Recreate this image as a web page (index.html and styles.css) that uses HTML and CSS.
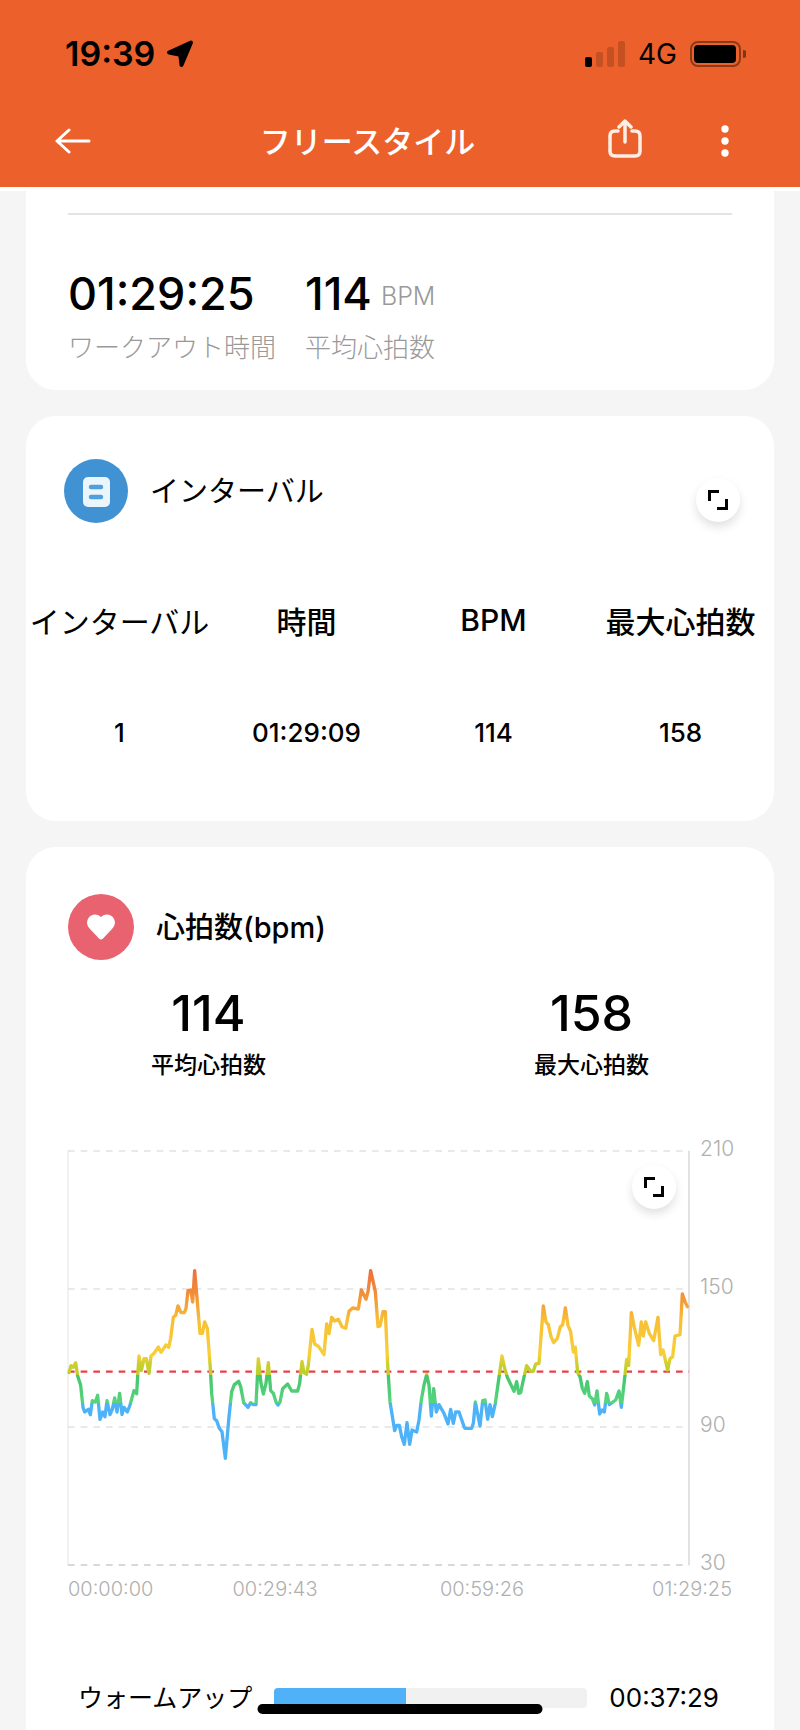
FILE: index.html
```
<!DOCTYPE html>
<html lang="ja">
<head>
    <meta charset="UTF-8">
    <meta name="viewport" content="width=device-width, initial-scale=1.0">
    <title>フリースタイル</title>
    <link rel="stylesheet" href="styles.css">
</head>
<body>
    <div id="wrap">
        <header id="header">
            <div class="status">
                <span class="status__time">19:39</span>
                <svg class="status__location" width="28" height="28" viewBox="0 0 28 28" aria-hidden="true">
                    <path d="M25 2.500 L3 12.500 L13 14.500 Q14.500 15 14.500 16.500 L15.500 25 Z" fill="#000" stroke="#000" stroke-width="4" stroke-linejoin="round"/>
                </svg>
                <svg class="status__signal" width="41" height="26" viewBox="0 0 41 26" aria-hidden="true">
                    <rect x="0" y="16" width="7" height="10" rx="2"/>
                    <g opacity="0.16">
                        <rect x="11" y="11" width="7" height="15" rx="2"/>
                        <rect x="22" y="6" width="7" height="20" rx="2"/>
                        <rect x="33" y="0" width="7" height="26" rx="2"/>
                    </g>
                </svg>
                <span class="status__network">4G</span>
                <svg class="status__battery" width="56" height="26" viewBox="0 0 56 26" aria-hidden="true">
                    <rect x="1" y="1" width="49" height="24" rx="7" fill="none" stroke="#000" stroke-opacity="0.4" stroke-width="2"/>
                    <rect x="4" y="4" width="42" height="18" rx="4"/>
                    <path d="M53 9 a4 4 0 0 1 0 8 Z" fill-opacity="0.45"/>
                </svg>
            </div>
            <nav class="nav">
                <button class="nav__btn" type="button" aria-label="戻る">
                    <svg width="36" height="26" viewBox="0 0 36 26">
                        <path d="M14 2 L2 13 L14 24 M2 13 H34" fill="none" stroke="#fff" stroke-width="3" stroke-linecap="round" stroke-linejoin="round"/>
                    </svg>
                </button>
                <h1 class="nav__title">フリースタイル</h1>
                <button class="nav__btn share" type="button" aria-label="共有">
                    <svg width="34" height="40" viewBox="0 0 34 40">
                        <path d="M10 12 H7 Q2 12 2 17 V32 Q2 37 7 37 H27 Q32 37 32 32 V17 Q32 12 27 12 H24" fill="none" stroke="#fdeee6" stroke-width="3.500" stroke-linecap="round"/>
                        <path d="M17 23 V3 M11 8 L17 2 L23 8" fill="none" stroke="#fdeee6" stroke-width="3.500" stroke-linecap="round" stroke-linejoin="round"/>
                    </svg>
                </button>
                <button class="nav__btn" type="button" aria-label="メニュー">
                    <svg width="10" height="34" viewBox="0 0 10 34">
                        <g fill="#fff">
                            <circle cx="5" cy="5" r="3.700"/>
                            <circle cx="5" cy="17" r="3.700"/>
                            <circle cx="5" cy="29" r="3.700"/>
                        </g>
                    </svg>
                </button>
            </nav>
        </header>

        <main id="main">
            <!-- サマリー -->
            <section class="card summary">
                <div class="summary__item">
                    <p class="summary__num">01:29:25</p>
                    <p class="summary__label">ワークアウト時間</p>
                </div>
                <div class="summary__item">
                    <p class="summary__num">114<span class="unit">BPM</span></p>
                    <p class="summary__label">平均心拍数</p>
                </div>
            </section>

            <!-- インターバル -->
            <section class="card interval">
                <div class="card__head">
                    <svg width="64" height="64" viewBox="0 0 64 64" aria-hidden="true">
                        <circle cx="32" cy="32" r="32" fill="#4192d2"/>
                        <rect x="19" y="18" width="27" height="30" rx="5" fill="#ebf5fc"/>
                        <path d="M27 28 H37 M27 38 H37" stroke="#4f9fdc" stroke-width="4.500" stroke-linecap="round"/>
                    </svg>
                    <h2 class="card__title kana">インターバル</h2>
                    <button class="expand" type="button" aria-label="拡大">
                        <svg width="20" height="20" viewBox="0 0 20 20">
                            <path d="M1.500 11 V1.500 H11 M9 18.500 H18.500 V9" fill="none" stroke="#000" stroke-width="3"/>
                        </svg>
                    </button>
                </div>
                <table class="interval__table">
                    <thead>
                        <tr>
                            <th class="kana" scope="col">インターバル</th>
                            <th scope="col">時間</th>
                            <th scope="col">BPM</th>
                            <th scope="col">最大心拍数</th>
                        </tr>
                    </thead>
                    <tbody>
                        <tr>
                            <td>1</td>
                            <td>01:29:09</td>
                            <td>114</td>
                            <td>158</td>
                        </tr>
                    </tbody>
                </table>
            </section>

            <!-- 心拍数 -->
            <section class="card heart">
                <div class="card__head">
                    <svg width="66" height="66" viewBox="0 0 66 66" aria-hidden="true">
                        <circle cx="33" cy="33" r="33" fill="#e96270"/>
                        <path d="M33 23 C29 19 23 20 20.500 24 C18 28 19 32 22 35 L31 44.500 Q33 46.500 35 44.500 L44 35 C47 32 48 28 45.500 24 C43 20 37 19 33 23 Z" fill="#fff"/>
                    </svg>
                    <h2 class="card__title">心拍数(bpm)</h2>
                </div>
                <div class="heart__stats">
                    <div class="stat">
                        <p class="stat__num">114</p>
                        <p class="stat__label">平均心拍数</p>
                    </div>
                    <div class="stat">
                        <p class="stat__num">158</p>
                        <p class="stat__label">最大心拍数</p>
                    </div>
                </div>
                <div class="chart">
                    <div class="chart__plot">
                        <svg class="chart__svg" viewBox="0 0 1863 1242" role="img" aria-label="心拍数グラフ">
                            <defs>
                                <linearGradient id="zone" gradientUnits="userSpaceOnUse" x1="0" y1="342" x2="0" y2="942">
                                    <stop offset="0" stop-color="#ef6840"/>
                                    <stop offset="0.130" stop-color="#f18a38"/>
                                    <stop offset="0.280" stop-color="#f7c036"/>
                                    <stop offset="0.450" stop-color="#f8cf38"/>
                                    <stop offset="0.500" stop-color="#c8cf2e"/>
                                    <stop offset="0.550" stop-color="#bccf30"/>
                                    <stop offset="0.550" stop-color="#44c66e"/>
                                    <stop offset="0.690" stop-color="#58d47e"/>
                                    <stop offset="0.690" stop-color="#4db2f8"/>
                                    <stop offset="1" stop-color="#4db2f8"/>
                                </linearGradient>
                            </defs>
                            <g fill="none">
                                <path d="M0 0 V1242" stroke="#ececec" stroke-width="4"/>
                                <path d="M1863 0 V1242" stroke="#dcdcdc" stroke-width="5"/>
                                <path d="M0 0 H1863 M0 414 H1863 M0 828 H1863" stroke="#e2e2e2" stroke-width="4" stroke-dasharray="20 18"/>
                                <path d="M0 1242 H1863" stroke="#cccccc" stroke-width="5" stroke-dasharray="20 18"/>
                                <path d="M0 662 H1863" stroke="#ec4048" stroke-width="7" stroke-dasharray="20 18"/>
                                <polyline stroke="url(#zone)" stroke-width="10" stroke-linejoin="round" stroke-linecap="round" points="
                                    3,665 9,644 16,649 23,635 29,675 38,703 45,769 50,783 61,775 67,791 73,749 82,753 89,733 96,805
                                    104,783 111,797 117,749 126,791 133,775 140,741 147,783 155,727 162,791 168,769 178,783 186,762
                                    198,719 206,728 209,675 213,615 220,659 228,623 235,623 243,667 249,615 258,607 271,588 279,604
                                    294,582 302,589 308,562 316,499 323,493 330,465 339,485 349,485 354,472 360,419 368,417 374,453
                                    380,359 396,547 403,547 410,513 418,532 427,652 431,727 439,803 446,809 454,832 462,842 472,922
                                    483,797 491,722 499,701 512,691 518,707 527,755 540,769 548,755 556,761 564,761 571,623 579,697
                                    586,729 594,697 601,635 608,719 616,727 624,753 630,762 636,753 644,713 659,699 671,720 689,720
                                    695,697 702,631 708,665 716,669 721,642 732,535 740,579 752,587 768,611 776,519 783,548 791,499
                                    800,510 811,505 822,527 833,532 843,481 854,471 871,474 880,417 894,445 900,422 908,359 922,422
                                    930,527 936,525 945,482 952,482 959,642 966,752 980,839 986,823 994,823 1001,857 1009,880 1017,815
                                    1025,880 1032,837 1046,843 1053,807 1060,747 1068,702 1076,671 1083,702 1090,795 1097,713 1105,783
                                    1113,761 1128,787 1140,819 1148,775 1156,817 1163,783 1173,783 1189,829 1191,832 1211,832 1216,817
                                    1222,753 1236,825 1244,749 1251,747 1259,805 1266,761 1273,797 1282,757 1294,672 1302,615 1310,652
                                    1318,679 1338,721 1346,692 1352,727 1358,725 1366,687 1376,644 1388,661 1396,661 1403,639 1413,637
                                    1426,465 1434,513 1441,521 1449,557 1457,575 1468,562 1477,527 1484,521 1492,471 1500,523 1508,542
                                    1516,603 1522,589 1529,665 1536,677 1543,712 1550,727 1558,692 1564,735 1573,743 1580,762 1587,720
                                    1595,789 1602,777 1609,783 1616,727 1624,761 1643,747 1653,720 1660,769 1671,672 1676,625 1682,643
                                    1690,485 1699,529 1712,583 1720,513 1726,555 1733,513 1744,547 1757,569 1770,499 1778,611 1785,597
                                    1799,657 1806,623 1814,617 1821,555 1836,551 1843,429 1851,452 1858,467"/>
                            </g>
                        </svg>
                        <button class="expand" type="button" aria-label="拡大">
                            <svg width="20" height="20" viewBox="0 0 20 20">
                                <path d="M1.500 11 V1.500 H11 M9 18.500 H18.500 V9" fill="none" stroke="#000" stroke-width="3"/>
                            </svg>
                        </button>
                    </div>
                    <div class="chart__y">
                        <span>210</span>
                        <span>150</span>
                        <span>90</span>
                        <span>30</span>
                    </div>
                </div>
                <div class="chart__x">
                    <span>00:00:00</span>
                    <span>00:29:43</span>
                    <span>00:59:26</span>
                    <span>01:29:25</span>
                </div>
                <div class="zone">
                    <span class="zone__name">ウォームアップ</span>
                    <div class="zone__bar"><div class="zone__fill" style="width: 42%"></div></div>
                    <span class="zone__time">00:37:29</span>
                </div>
            </section>
        </main>
        <div class="home"></div>
    </div>
</body>
</html>
```
FILE: styles.css
```
* {
    margin: 0;
    padding: 0;
    box-sizing: border-box;
}
body {
    background-color: #f5f5f5;
    color: #000;
    font-family: Inter, "Noto Sans CJK JP", sans-serif;
}
svg {
    display: block;
}
button {
    border: 0;
    background: none;
    cursor: pointer;
}
#wrap {
    display: flex;
    flex-direction: column;
    min-height: 100vh;
}

/* ヘッダー */
#header {
    background-color: #ec612b;
    border-bottom: 4px solid #fff;
}
.status {
    display: flex;
    align-items: center;
    height: 95px;
    padding: 12px 54px 0 65px;
}
.status__time {
    font-size: 34px;
    font-weight: 600;
}
.status__location {
    margin-left: 11px;
}
.status__signal {
    margin-left: auto;
}
.status__network {
    margin: 0 13px 0 12px;
    font-size: 28px;
    font-weight: 400;
}
.nav {
    display: flex;
    align-items: center;
    height: 92px;
    padding: 0 70px 0 55px;
}
.nav__title {
    flex: 1;
    padding: 0 0 4px 36px;
    color: #fff;
    font-size: 31px;
    font-weight: 500;
    text-align: center;
}
.share {
    margin-right: 78px;
    padding-bottom: 4px;
}

/* カード */
#main {
    flex: 1;
    display: flex;
    flex-direction: column;
    gap: 26px;
    padding: 0 26px;
}
.card {
    background-color: #fff;
    border-radius: 30px;
}
.card__head {
    display: flex;
    align-items: center;
    gap: 22px;
}
.card__title {
    flex: 1;
    padding-bottom: 4px;
    font-size: 29px;
    font-weight: 500;
}
.card__title.kana {
    font-weight: 400;
}
.expand {
    display: flex;
    align-items: center;
    justify-content: center;
    width: 44px;
    height: 44px;
    border-radius: 50%;
    background-color: #fff;
    box-shadow: 0 5px 10px rgba(0, 0, 0, 0.12);
}

/* サマリー */
.summary {
    display: flex;
    flex-wrap: wrap;
    gap: 29px;
    padding: 0 42px 23px;
    border-radius: 0 0 30px 30px;
}
.summary::before {
    content: "";
    flex: 0 0 100%;
    height: 22px;
    border-bottom: 2px solid #e4e4e4;
}
.summary__num {
    display: flex;
    align-items: center;
    margin-top: 22px;
    font-size: 45px;
    font-weight: 500;
    line-height: 56px;
}
.unit {
    margin: 4px 0 0 9px;
    color: #999;
    font-size: 25px;
    font-weight: 300;
    line-height: 30px;
}
.summary__label {
    margin-top: 7px;
    color: #999;
    font-size: 26px;
    font-weight: 300;
    line-height: 38px;
}

/* インターバル */
.interval {
    padding: 43px 0 33px;
}
.interval .card__head {
    padding: 0 34px 0 38px;
}
.interval .expand {
    margin-top: 18px;
}
.interval__table {
    width: 100%;
    margin-top: 41px;
    border-collapse: collapse;
    table-layout: fixed;
}
.interval__table th,
.interval__table td {
    height: 112px;
    text-align: center;
    white-space: nowrap;
}
.interval__table th {
    font-size: 30px;
    font-weight: 500;
}
.interval__table .kana {
    font-weight: 400;
}
.interval__table td {
    font-size: 26px;
    font-weight: 500;
}

/* 心拍数 */
.heart {
    flex: 1;
    padding: 47px 42px 8px;
    border-radius: 30px 30px 0 0;
}
.heart__stats {
    display: flex;
    justify-content: space-between;
    padding: 0 83px;
    margin-top: 22px;
}
.stat {
    text-align: center;
}
.stat__num {
    font-size: 50px;
    font-weight: 500;
    line-height: 62px;
}
.stat__label {
    margin-top: 5px;
    font-size: 23px;
    font-weight: 500;
    line-height: 32px;
}
.chart {
    display: flex;
    gap: 11px;
    margin-top: 70px;
}
.chart__plot {
    position: relative;
    flex: 1;
}
.chart__svg {
    width: 100%;
    overflow: visible;
}
.chart__plot .expand {
    position: absolute;
    top: 14px;
    right: 13px;
}
.chart__y {
    display: flex;
    flex-direction: column;
    justify-content: space-between;
    width: 32px;
    margin: -14px 0 -10px;
    color: #b0b0b0;
    font-size: 21px;
    font-weight: 300;
    line-height: 24px;
}
.chart__x {
    display: grid;
    grid-template-columns: 1fr 2fr 2fr 1fr 43px;
    margin-top: 12px;
    color: #b0b0b0;
    font-size: 20px;
    font-weight: 300;
    line-height: 24px;
    text-align: center;
}
.chart__x span:first-child {
    text-align: left;
}
.chart__x span:last-child {
    grid-column: 4 / 6;
    text-align: right;
}
.zone {
    display: flex;
    align-items: center;
    margin-top: 78px;
    padding: 0 13px 0 10px;
    font-size: 26px;
    line-height: 38px;
}
.zone__name {
    font-size: 25px;
}
.zone__bar {
    flex: 1;
    height: 20px;
    margin: 0 22px;
    border-radius: 4px;
    background-color: #f1f1f1;
    overflow: hidden;
}
.zone__fill {
    height: 100%;
    background-color: #4fb2f8;
}
.home {
    position: fixed;
    bottom: 16px;
    left: 50%;
    width: 285px;
    height: 10px;
    border-radius: 5px;
    background-color: #000;
    transform: translateX(-50%);
}
```
